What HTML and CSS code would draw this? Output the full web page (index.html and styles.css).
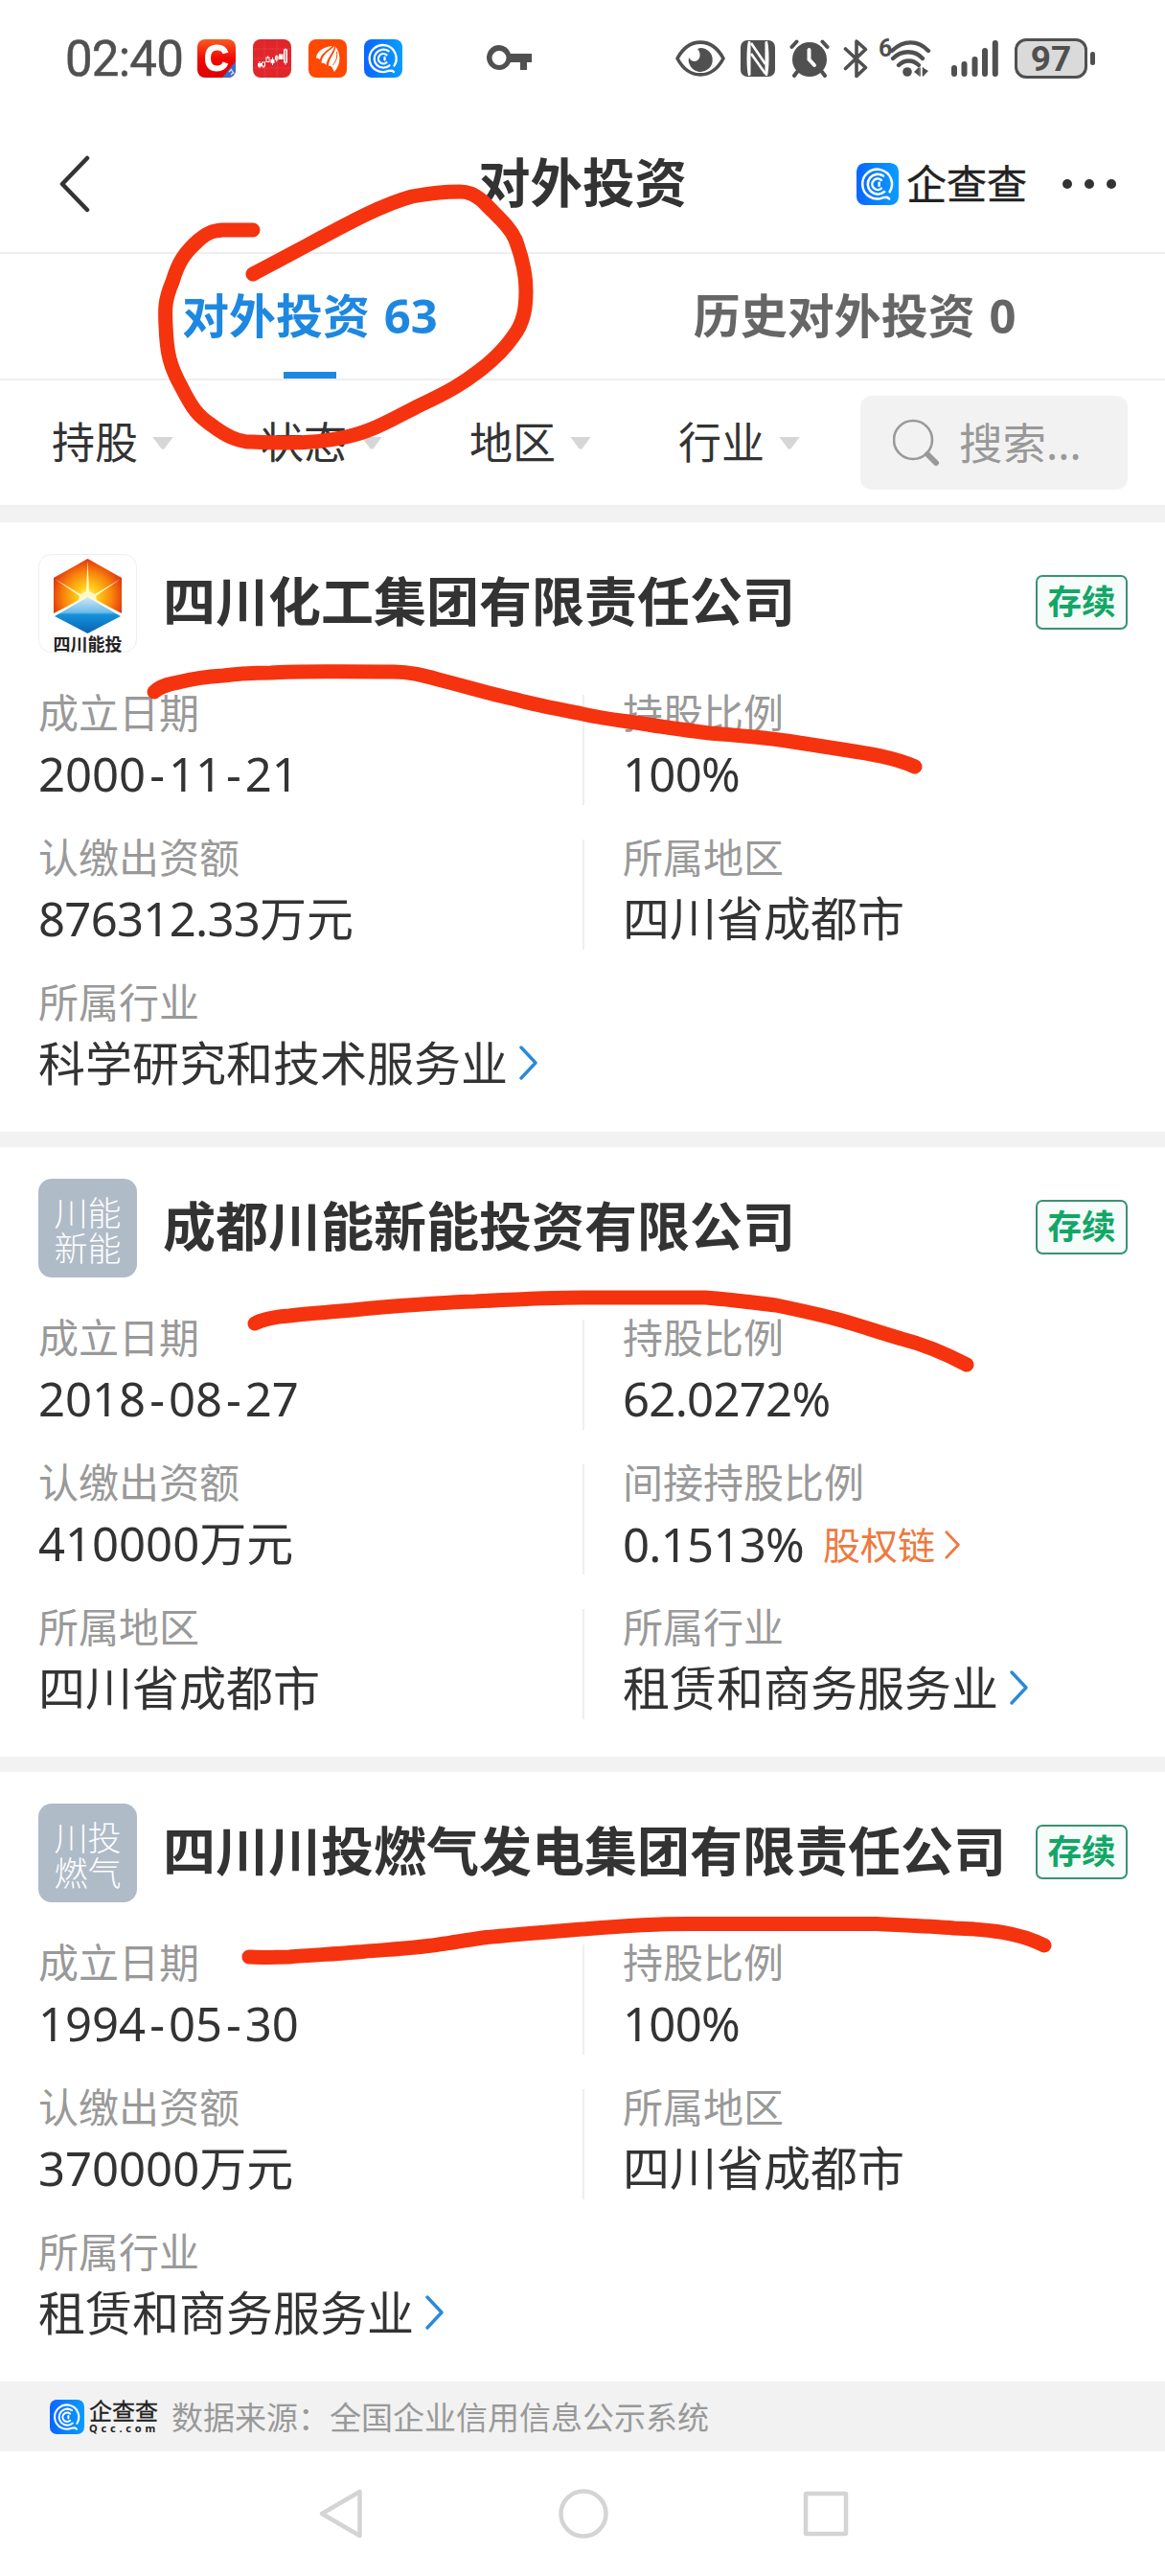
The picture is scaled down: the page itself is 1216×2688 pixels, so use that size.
FILE: index.html
```html
<!DOCTYPE html>
<html lang="zh-CN">
<head>
    <meta charset="UTF-8">
    <meta name="viewport" content="width=device-width, initial-scale=1.0">
    <title>对外投资</title>
    <link rel="stylesheet" href="styles.css">
</head>
<body>
    <svg class="defs" width="0" height="0">
        <defs>
            <linearGradient id="qccBg" x1="0" y1="0" x2="1" y2="0">
                <stop offset="0" stop-color="#0a66ff"/>
                <stop offset="1" stop-color="#0a9dff"/>
            </linearGradient>
            <symbol id="qcc" viewBox="0 0 40 40">
                <rect width="40" height="40" rx="8" fill="url(#qccBg)"/>
                <g fill="none" stroke="#fff" stroke-width="2.3" stroke-linecap="round">
                    <path d="M31.5 27.5A14 14 0 1 0 25 33l4-.4 2 1.400"/>
                    <path d="M25.500 12.300A9.500 9.500 0 1 0 26.500 27.300"/>
                    <path d="M23.500 16.300A5.200 5.200 0 1 0 23.500 24.200"/>
                    <path d="M21.500 18.800v2.700"/>
                </g>
            </symbol>
            <symbol id="arrow" viewBox="0 0 20 36">
                <path d="M2 2l15 16L2 34" fill="none" stroke="currentColor" stroke-width="3.400" stroke-linecap="round" stroke-linejoin="round"/>
            </symbol>
        </defs>
    </svg>

    <div class="status-bar">
        <span class="time">02:40</span>
        <div class="apps">
            <svg width="40" height="40" viewBox="0 0 40 40">
                <defs>
                    <linearGradient id="redBg" x1="0" y1="0" x2="0" y2="1">
                        <stop offset="0" stop-color="#fb5a20"/>
                        <stop offset=".5" stop-color="#f00a05"/>
                        <stop offset="1" stop-color="#dc0000"/>
                    </linearGradient>
                    <clipPath id="appClip"><rect width="40" height="40" rx="8"/></clipPath>
                </defs>
                <g clip-path="url(#appClip)">
                    <rect width="40" height="40" fill="url(#redBg)"/>
                    <path d="M40 23v17H26z" fill="#3b6fd0"/>
                    <path d="M33 34l3-3M35 37l3-3M35 31l3 5" stroke="#cfe0ff" stroke-width="1.200"/>
                </g>
                <path d="M29.500 14.500C28 9.500 24.500 8.500 20.500 8.500 13.500 8.500 11 13 11 19.500s2.500 11 9.500 11c4.500 0 7.500-2 9-6" fill="none" stroke="#fff" stroke-width="6"/>
            </svg>
            <svg width="40" height="40" viewBox="0 0 40 40">
                <rect width="40" height="40" rx="8" fill="#e0262b"/>
                <path d="M0 10h40M0 20h40M0 30h40M12 0v40M25 0v40" stroke="#e8454a" stroke-width=".6"/>
                <g fill="#fff">
                    <rect x="5" y="25" width="4" height="3.500"/>
                    <rect x="18.500" y="21" width="4" height="4"/>
                    <rect x="27" y="15.500" width="4.500" height="5.500"/>
                </g>
                <g fill="none" stroke="#fff" stroke-width="1">
                    <rect x="9.500" y="24" width="3" height="4"/>
                    <rect x="14" y="19" width="3" height="4.500"/>
                    <rect x="23.500" y="18" width="2.500" height="3"/>
                    <rect x="32.500" y="11" width="3" height="13"/>
                    <path d="M7 23v7M11 28v2M15.500 17.500v2M20.500 19v8M24.800 16.500v7M34 9.500v17"/>
                </g>
            </svg>
            <svg width="40" height="40" viewBox="0 0 40 40">
                <rect width="40" height="40" rx="8" fill="#ff4800"/>
                <g fill="#fff">
                    <path d="M25 7C15 8 8 13 8 20c3-1 3 1 4 1C13 15 19 12 25 7z"/>
                    <path d="M27.500 7C20 13 13.500 17 13.500 25c3-1 4 1 5 2C19 20 25 15 27.500 7z"/>
                    <path d="M28.500 8C27 16 21 20 21 28c3-1 4 2 6 6C35 25 33 14 28.500 8z"/>
                </g>
                <path d="M29.500 13c1 6-1 10-4 14" fill="none" stroke="#ff4800" stroke-width="1"/>
            </svg>
            <svg width="40" height="40"><use href="#qcc"/></svg>
        </div>
        <svg class="key" width="48" height="28" viewBox="0 0 48 28" fill="#505050">
            <path fill-rule="evenodd" d="M13 0a13 13 0 0 1 12 9h22v9h-5v8h-7v-8H25A13 13 0 1 1 13 0zm0 6a7.500 7.500 0 1 0 0 15 7.500 7.500 0 0 0 0-15z"/>
        </svg>
        <div class="system">
            <svg class="eye" width="52" height="38" viewBox="0 0 52 38">
                <path d="M2 19C14-3.500 38-3.500 50 19 38 41.500 14 41.500 2 19z" fill="none" stroke="#505050" stroke-width="3.600" stroke-linejoin="round"/>
                <path d="M26 8a12.500 12.500 0 1 1-12 10c2 4 6 5 9 3 4-3 3-9 0-12z" fill="#505050"/>
            </svg>
            <svg class="nfc" width="36" height="38" viewBox="0 0 36 38">
                <rect width="36" height="38" rx="7" fill="#505050"/>
                <path d="M9 1C7 9 7 29 9 37M9.500 1.500v35M27 1c2 8 2 28 0 36M26.500 1.500v35" fill="none" stroke="#fff" stroke-width="2"/>
                <path d="M11 3l15 22M11 14l15 21" stroke="#fff" stroke-width="2.600"/>
            </svg>
            <svg class="alarm" width="42" height="40" viewBox="0 0 42 40" fill="none" stroke="#505050" stroke-linecap="round">
                <circle cx="21" cy="21" r="18" fill="#505050" stroke="none"/>
                <path d="M2.500 8l5-5.500M39.500 8l-5-5.500M8 34l-3 4M34 34l3 4" stroke-width="4"/>
                <path d="M20.500 11v10l5.500 6" stroke="#fff" stroke-width="4"/>
            </svg>
            <svg class="bt" width="26" height="40" viewBox="0 0 26 40" fill="none" stroke="#505050" stroke-width="3.600" stroke-linejoin="round" stroke-linecap="round">
                <path d="M2.500 10l21 19.500-9.500 9V2l9.500 8.500L2.500 30.500"/>
            </svg>
            <span class="six">6</span>
            <svg class="wifi" width="44" height="40" viewBox="0 0 44 40" fill="none" stroke="#505050" stroke-width="4.300" stroke-linecap="round">
                <path d="M2 12c12-11.500 27-11.500 38 0M3 20c9-9 23-9 31 0M9 27c6-6 15-6 21 0"/>
                <circle cx="18" cy="34" r="4.800" fill="#505050" stroke="none"/>
                <path d="M25 34l5-5v9zM35 30v8l5-5z" stroke="none" fill="#505050"/>
                <path d="M31 30v8M34.500 30v8" stroke-width="1.600"/>
            </svg>
            <svg class="signal" width="50" height="40" viewBox="0 0 50 40" stroke="#505050" stroke-width="6" stroke-linecap="round">
                <path d="M3 30v6M13.500 26v10M24.500 21v15M35 12v24M45.800 4v32"/>
            </svg>
            <div class="battery">97</div>
            <span class="battery-tip"></span>
        </div>
    </div>

    <div class="header">
        <svg class="back" width="34" height="60" viewBox="0 0 34 60">
            <path d="M30 3L4 30l26 27" fill="none" stroke="#333" stroke-width="4.500" stroke-linecap="round" stroke-linejoin="round"/>
        </svg>
        <h1>对外投资</h1>
        <div class="brand">
            <svg width="44" height="44"><use href="#qcc"/></svg>
            <span class="brand-name">企查查</span>
        </div>
        <div class="more"><i></i><i></i><i></i></div>
    </div>

    <div class="tabs">
        <div class="tab active">对外投资 63</div>
        <div class="tab">历史对外投资 0</div>
    </div>

    <div class="filters">
        <div class="filter">持股<i class="caret"></i></div>
        <div class="filter">状态<i class="caret"></i></div>
        <div class="filter">地区<i class="caret"></i></div>
        <div class="filter">行业<i class="caret"></i></div>
        <div class="search">
            <svg width="50" height="50" viewBox="0 0 50 50" fill="none" stroke="#999">
                <circle cx="21" cy="22" r="20" stroke-width="2.600"/>
                <path d="M36 37l9 9" stroke-width="6" stroke-linecap="round"/>
            </svg>
            <span>搜索...</span>
        </div>
    </div>

    <div class="card">
        <div class="card-head">
            <svg class="logo" width="103" height="103" viewBox="0 0 103 103">
                <defs>
                    <radialGradient id="sun" gradientUnits="userSpaceOnUse" cx="51.500" cy="44" r="42">
                        <stop offset="0" stop-color="#fff9c0"/>
                        <stop offset=".22" stop-color="#ffd21a"/>
                        <stop offset=".6" stop-color="#f9850c"/>
                        <stop offset="1" stop-color="#dc2212"/>
                    </radialGradient>
                    <linearGradient id="water" x1="0" y1="0" x2="0" y2="1">
                        <stop offset="0" stop-color="#cfe8f8"/>
                        <stop offset=".42" stop-color="#6dbbea"/>
                        <stop offset=".48" stop-color="#1593da"/>
                        <stop offset="1" stop-color="#0862b4"/>
                    </linearGradient>
                </defs>
                <rect x=".5" y=".5" width="102" height="102" rx="13" fill="#fff" stroke="#eee"/>
                <path d="M51.500 5L87 25v37L51.500 44 16 62V25z" fill="url(#sun)"/>
                <path d="M51.500 45L86 65 51.500 83 17 65z" fill="url(#water)"/>
                <path d="M51.500 7l1.500 32 6 3 27-16-26 18 1 4 26 15-35.500-18L16 63l26-15 1-4-26-18 27 16 6-3z" fill="#fff8c8"/>
                <text class="logo-text" x="51.500" y="100.500" text-anchor="middle">四川能投</text>
            </svg>
            <h2>四川化工集团有限责任公司</h2>
            <span class="badge">存续</span>
        </div>
        <div class="fields">
            <div class="field">
                <label>成立日期</label>
                <p>2000<b>-</b>11<b>-</b>21</p>
            </div>
            <div class="field">
                <label>持股比例</label>
                <p class="num">100%</p>
            </div>
            <div class="field">
                <label>认缴出资额</label>
                <p><span class="num">876312.33</span>万元</p>
            </div>
            <div class="field">
                <label>所属地区</label>
                <p>四川省成都市</p>
            </div>
            <div class="field wide">
                <label>所属行业</label>
                <p>科学研究和技术服务业<svg class="go" width="20" height="36"><use href="#arrow"/></svg></p>
            </div>
        </div>
    </div>

    <div class="card">
        <div class="card-head">
            <div class="avatar"><span>川能</span><span>新能</span></div>
            <h2>成都川能新能投资有限公司</h2>
            <span class="badge">存续</span>
        </div>
        <div class="fields">
            <div class="field">
                <label>成立日期</label>
                <p>2018<b>-</b>08<b>-</b>27</p>
            </div>
            <div class="field">
                <label>持股比例</label>
                <p class="num">62.0272%</p>
            </div>
            <div class="field">
                <label>认缴出资额</label>
                <p>410000万元</p>
            </div>
            <div class="field">
                <label>间接持股比例</label>
                <p><span class="num">0.1513%</span><span class="chain">股权链<svg width="17" height="30"><use href="#arrow"/></svg></span></p>
            </div>
            <div class="field">
                <label>所属地区</label>
                <p>四川省成都市</p>
            </div>
            <div class="field">
                <label>所属行业</label>
                <p>租赁和商务服务业<svg class="go" width="20" height="36"><use href="#arrow"/></svg></p>
            </div>
        </div>
    </div>

    <div class="card">
        <div class="card-head">
            <div class="avatar"><span>川投</span><span>燃气</span></div>
            <h2>四川川投燃气发电集团有限责任公司</h2>
            <span class="badge">存续</span>
        </div>
        <div class="fields">
            <div class="field">
                <label>成立日期</label>
                <p>1994<b>-</b>05<b>-</b>30</p>
            </div>
            <div class="field">
                <label>持股比例</label>
                <p class="num">100%</p>
            </div>
            <div class="field">
                <label>认缴出资额</label>
                <p>370000万元</p>
            </div>
            <div class="field">
                <label>所属地区</label>
                <p>四川省成都市</p>
            </div>
            <div class="field wide">
                <label>所属行业</label>
                <p>租赁和商务服务业<svg class="go" width="20" height="36"><use href="#arrow"/></svg></p>
            </div>
        </div>
    </div>

    <div class="source">
        <svg width="36" height="36"><use href="#qcc"/></svg>
        <div class="source-brand">
            <span class="source-name">企查查</span>
            <span class="source-site">Qcc.com</span>
        </div>
        <span class="source-text">数据来源：全国企业信用信息公示系统</span>
    </div>

    <div class="nav-bar">
        <svg width="48" height="54" viewBox="0 0 48 54">
            <path d="M43.500 4v46L4 27z" fill="none" stroke="#d4d4d4" stroke-width="4.500" stroke-linejoin="round"/>
        </svg>
        <svg width="54" height="54" viewBox="0 0 54 54">
            <circle cx="27" cy="27" r="23.500" fill="none" stroke="#d4d4d4" stroke-width="4.500"/>
        </svg>
        <svg width="48" height="48" viewBox="0 0 48 48">
            <rect x="3" y="3" width="42" height="42" rx="1" fill="none" stroke="#d4d4d4" stroke-width="4.500"/>
        </svg>
    </div>

    <!-- pen marks over the page -->
    <svg class="marks" width="1216" height="2688" viewBox="0 0 1216 2688">
        <path d="M264 240H232C222 241 218 242 208 250 192 264 186 274 180 294 172 313 172 322 173 340 174 368 177 382 190 405 201 427 207 434 220 443 236 455 248 461 262 461 295 463 330 463 361 456 390 450 412 436 438 423 470 408 483 400 500 387 517 374 526 365 535 352 548 336 549 318 549 303 549 282 544 266 538 250 532 236 519 226 504 210 494 202 488 200 480 200 462 200 446 202 430 205 390 216 350 241 264 286"/>
        <path d="M161 722C167 716 175 714 186 712 201 708 217 706 233 705 249 703 266 702 283 702 310 700 332 701 411 701 430 701 446 706 465 711 488 717 512 724 535 729 560 736 584 740 608 745 630 750 650 752 670 755 694 759 717 762 740 765 768 767 794 769 821 773 841 776 860 779 879 782 905 786 932 790 955 800"/>
        <path d="M266 1381C275 1376 289 1374 302 1373 330 1370 359 1368 388 1365 424 1362 460 1359 496 1358 534 1356 571 1354 608 1354H736C762 1356 786 1359 810 1362 834 1367 857 1372 879 1378 900 1384 920 1391 941 1397 965 1403 986 1412 1009 1424"/>
        <path d="M260 2042C275 2043 288 2042 302 2042 326 2040 350 2039 372 2037 405 2034 436 2033 465 2028 478 2026 490 2024 504 2022 540 2018 574 2016 608 2013 645 2010 680 2007 725 2007.500H915C945 2009 972 2010 996 2012 1030 2013 1062 2016 1090 2030"/>
    </svg>
</body>
</html>
```
FILE: styles.css
```css
* {
    box-sizing: border-box;
}

body {
    margin: 0;
    width: 1216px;
    position: relative;
    background: #fff;
    color: #333;
    font-family: "Noto Sans", "Noto Sans CJK SC", sans-serif;
}

h1, h2, p {
    margin: 0;
}

svg {
    display: block;
    flex-shrink: 0;
}

.defs {
    position: absolute;
}

/* status bar */
.status-bar {
    height: 122px;
    padding: 0 73px 0 68px;
    display: flex;
    align-items: center;
}

.time {
    width: 138px;
    padding-top: 2px;
    font-family: Roboto, sans-serif;
    font-size: 51px;
    line-height: 60px;
    letter-spacing: -0.8px;
    color: #505050;
    -webkit-text-stroke: 0.5px #505050;
}

.apps {
    display: flex;
    gap: 18px;
}

.key {
    margin-left: 88px;
}

.system {
    margin-left: auto;
    display: flex;
    align-items: center;
}

.nfc {
    margin-left: 16px;
}

.alarm {
    margin-left: 15px;
}

.bt {
    margin-left: 14px;
}

.six {
    margin: 0 0 20px 11px;
    width: 13px;
    font-family: Roboto, sans-serif;
    font-size: 25px;
    font-weight: bold;
    line-height: 20px;
    color: #505050;
}

.wifi {
    margin-left: -1px;
}

.signal {
    margin-left: 20px;
}

.battery {
    width: 76px;
    height: 42px;
    margin-left: 16px;
    border: 3px solid #505050;
    border-radius: 12px;
    background: #dadada;
    color: #505050;
    font-family: Roboto, sans-serif;
    font-size: 37px;
    font-weight: bold;
    line-height: 38px;
    text-align: center;
}

.battery-tip {
    width: 5px;
    height: 14px;
    margin-left: 3px;
    border-radius: 3px;
    background: #505050;
}

/* header */
.header {
    height: 143px;
    padding: 0 51px 2px 61px;
    border-bottom: 2px solid #eee;
    display: flex;
    align-items: center;
}

.header h1 {
    margin-left: 404px;
    width: 395px;
    padding-bottom: 3px;
    font-size: 54.5px;
    line-height: 60px;
}

.brand {
    display: flex;
    align-items: center;
    gap: 8px;
}

.brand-name {
    width: 128px;
    font-size: 42px;
    line-height: 48px;
    white-space: nowrap;
    color: #222;
    -webkit-text-stroke: 0.4px #222;
}

.more {
    margin-left: auto;
    display: flex;
    gap: 13px;
}

.more i {
    width: 10px;
    height: 10px;
    border-radius: 50%;
    background: #333;
}

/* tabs */
.tabs {
    height: 132px;
    padding-left: 190px;
    border-bottom: 2px solid #eee;
    display: flex;
    gap: 267px;
}

.tab {
    display: flex;
    flex-direction: column;
    align-items: center;
    font-size: 49px;
    font-weight: bold;
    line-height: 128px;
    word-spacing: 2px;
    white-space: nowrap;
    color: #666;
}

.tab.active {
    color: #1e88e0;
}

.tab.active::after {
    content: "";
    width: 55px;
    height: 7px;
    margin-top: -5px;
    background: #1e88e0;
}

/* filters */
.filters {
    height: 132px;
    padding: 0 39px 0 54px;
    border-bottom: 2px solid #eee;
    display: flex;
    align-items: center;
}

.filter {
    width: 218px;
    display: flex;
    align-items: center;
    gap: 15px;
    font-size: 45px;
    line-height: 56px;
}

.filter:nth-child(4) {
    width: 189px;
}

.caret {
    width: 22px;
    height: 13px;
    background: #d6d6d6;
    clip-path: polygon(0 0, 100% 0, 56% 100%, 44% 100%);
}

.search {
    width: 279px;
    height: 98px;
    margin-left: auto;
    padding-left: 34px;
    border-radius: 12px;
    background: #f2f2f2;
    color: #999;
    display: flex;
    align-items: center;
    gap: 19px;
    font-size: 45.5px;
    line-height: 56px;
}

/* company card */
.card {
    height: 652px;
    padding: 33px 39px 0 40px;
    border-top: 16px solid #f2f2f2;
}

.card-head {
    height: 103px;
    display: flex;
    align-items: center;
}

.logo {
    overflow: visible;
}

.logo-text {
    font-size: 18px;
    font-weight: bold;
    fill: #222;
}

.avatar {
    width: 103px;
    height: 103px;
    border-radius: 14px;
    background: #afbbc7;
    color: #fff;
    display: flex;
    flex-direction: column;
    align-items: center;
    justify-content: center;
    font-family: "Noto Sans CJK SC", sans-serif;
    font-size: 35px;
    font-weight: 300;
    line-height: 37px;
}

.card-head h2 {
    margin-left: 27px;
    padding-bottom: 5px;
    font-size: 55px;
    line-height: 70px;
    white-space: nowrap;
}

.badge {
    width: 96px;
    height: 57px;
    margin-left: auto;
    margin-bottom: 3px;
    border: 2px solid #3a9273;
    border-radius: 7px;
    background: #f5fcf9;
    color: #12a767;
    font-size: 35.5px;
    font-weight: bold;
    line-height: 51px;
    text-align: center;
}

.fields {
    margin-top: 44px;
    display: grid;
    grid-template-columns: 568px 1fr;
    row-gap: 36px;
}

.field {
    height: 115px;
}

.field:nth-child(even) {
    padding-left: 40px;
    border-left: 2px solid #eee;
}

.field.wide {
    grid-column: span 2;
}

.field label {
    display: block;
    font-size: 42px;
    line-height: 38px;
    color: #999;
}

.field p {
    margin-top: 12px;
    display: flex;
    align-items: center;
    font-size: 49px;
    line-height: 64px;
    white-space: nowrap;
}

.field p b {
    padding: 0 4px;
    font-weight: normal;
}

.num {
    letter-spacing: -0.7px;
}

.go {
    margin-left: 12px;
    color: #2b8ad8;
}

.chain {
    margin-left: 20px;
    padding-top: 2px;
    display: flex;
    align-items: center;
    gap: 10px;
    font-size: 39px;
    color: #ee7a40;
}

/* data source */
.source {
    height: 73px;
    padding-left: 52px;
    background: #f2f2f2;
    color: #999;
    display: flex;
    align-items: center;
}

.source-brand {
    width: 86px;
    margin-left: 5px;
    display: flex;
    flex-direction: column;
    color: #222;
}

.source-name {
    font-size: 24px;
    line-height: 25px;
    -webkit-text-stroke: 0.3px #222;
}

.source-site {
    font-size: 11px;
    font-weight: bold;
    line-height: 12px;
    letter-spacing: 3.8px;
}

.source-text {
    padding-top: 2px;
    font-size: 33px;
    line-height: 40px;
}

/* system navigation */
.nav-bar {
    height: 130px;
    padding: 0 330px 0 332px;
    display: flex;
    align-items: center;
    justify-content: space-between;
}

.marks {
    position: absolute;
    top: 0;
    left: 0;
    fill: none;
    stroke: #f5330f;
    stroke-width: 15;
    stroke-linecap: round;
    stroke-linejoin: round;
}
```
